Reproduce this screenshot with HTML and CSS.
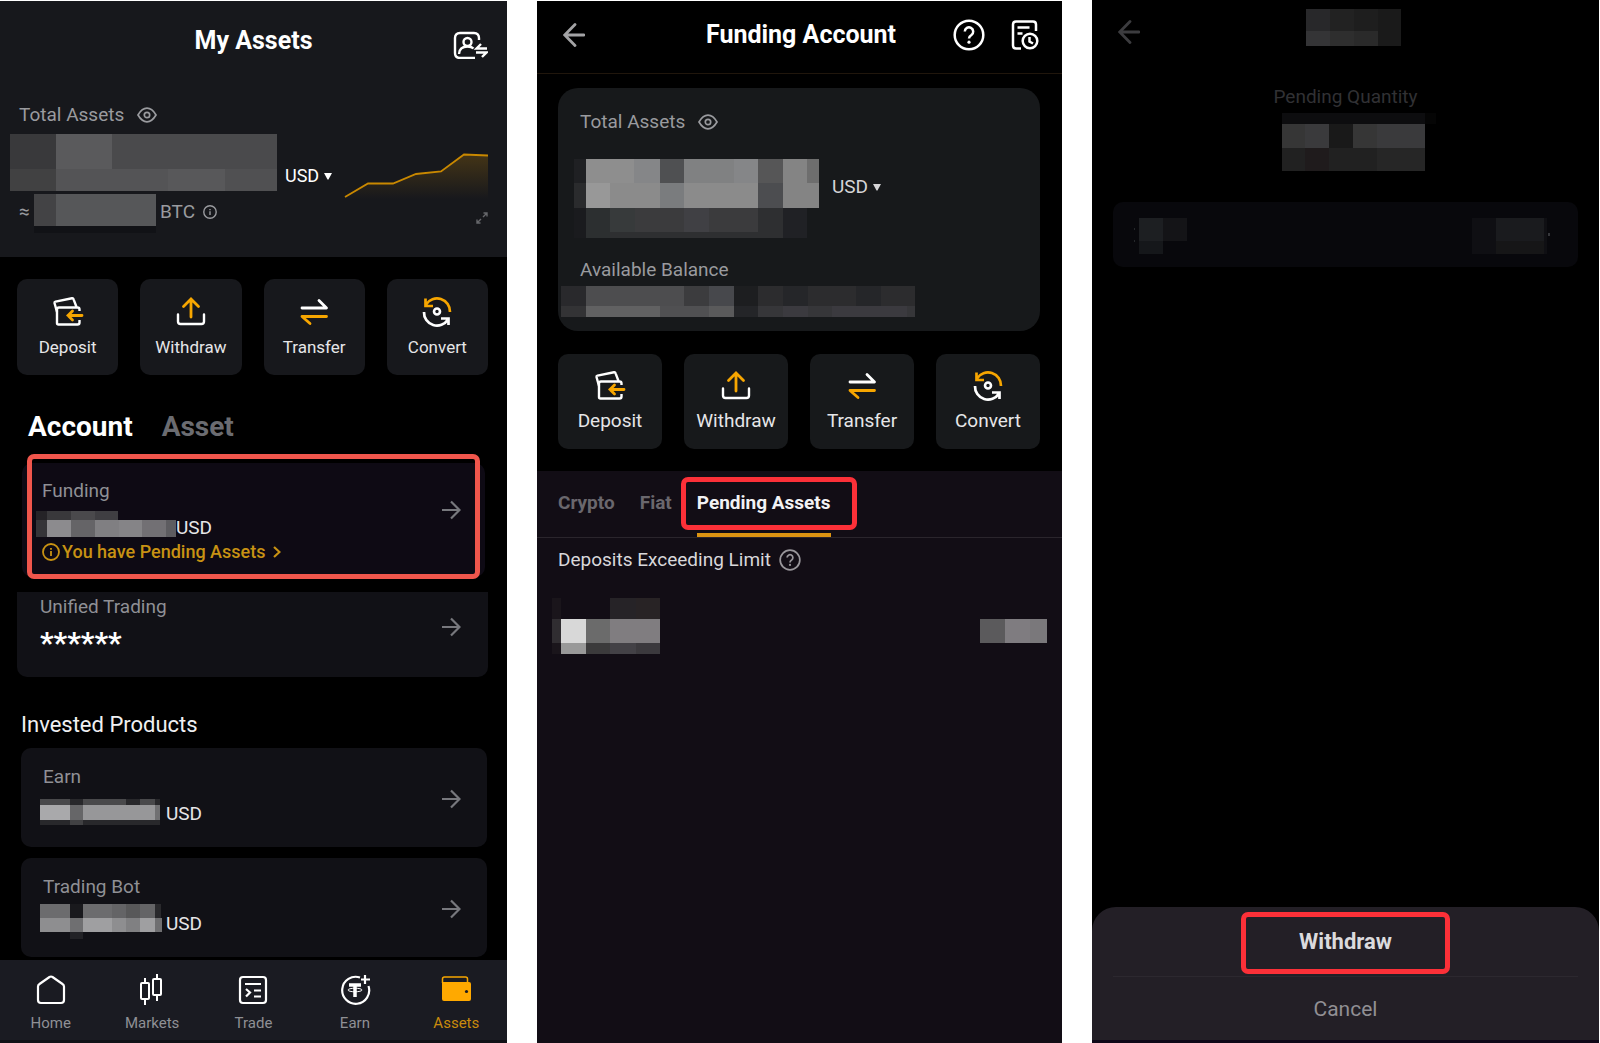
FILE: index.html
```html
<!DOCTYPE html>
<html lang="en">
<head>
<meta charset="utf-8">
<meta name="viewport" content="width=device-width, initial-scale=1">
<title>Pending assets</title>
<link rel="stylesheet" href="styles.css">
</head>
<body>
<svg class="sprite" aria-hidden="true">
  <symbol id="deposit" viewBox="0 0 34 34"><g fill="none" stroke="#fff" stroke-width="2.400" stroke-linejoin="round"><path d="M28.500 16V14.500q0-2-2-2H8q-2 0-2 2V28q0 1.500 1.500 1.500h19q2 0 2-2V25"/><path d="M6 17 3.500 8Q3.300 7 4.500 6.600L21 3.300q1.200-.2 1.600 1L25.500 12"/></g><path d="M31 20.500H17M21.500 16 17 20.500l4.500 4.500" fill="none" stroke="#f7a600" stroke-width="2.800" stroke-linecap="round"/></symbol>
  <symbol id="withdraw" viewBox="0 0 34 34"><path d="M4 19.500v7q0 2.500 2.500 2.500h21q2.500 0 2.500-2.500v-7" fill="none" stroke="#fff" stroke-width="2.400" stroke-linecap="round"/><path d="M17 22V4.500M9.500 11.500 17 4l7.500 7.500" fill="none" stroke="#f7a600" stroke-width="2.800" stroke-linecap="round"/></symbol>
  <symbol id="transfer" viewBox="0 0 34 34"><g fill="none" stroke-width="2.800" stroke-linecap="round" stroke-linejoin="round"><path d="M5 13h24.500L22 5.500" stroke="#fff"/><path d="M29.500 21.500H5l8 7" stroke="#f7a600"/></g></symbol>
  <symbol id="convert" viewBox="0 0 34 34"><path d="M30 17A13 13 0 0 0 6 9.500M5.500 3.500V11H13" fill="none" stroke="#f7a600" stroke-width="2.700"/><path d="M4 17a13 13 0 0 0 24 7.500M28.500 30v-6.500H21" fill="none" stroke="#fff" stroke-width="2.700"/><circle cx="17" cy="16.500" r="3" fill="none" stroke="#fff" stroke-width="2.600"/></symbol>
  <symbol id="eye" viewBox="0 0 20 16"><path d="M1 8Q5 1.200 10 1.200T19 8Q15 14.800 10 14.800T1 8Z" fill="none" stroke="currentColor" stroke-width="1.700"/><circle cx="10" cy="8" r="2.700" fill="none" stroke="currentColor" stroke-width="1.700"/></symbol>
  <symbol id="info" viewBox="0 0 18 18"><circle cx="9" cy="9" r="8" fill="none" stroke="currentColor" stroke-width="1.800"/><path d="M9 5v1.800M9 8v5" stroke="currentColor" stroke-width="1.800"/></symbol>
  <symbol id="help" viewBox="0 0 32 32"><circle cx="16" cy="16" r="14.300" fill="none" stroke="currentColor" stroke-width="2.500"/><path d="M11.800 12.500a4.200 4.200 0 1 1 6.600 3.500Q16 17.500 16 19.500" fill="none" stroke="currentColor" stroke-width="2.500"/><circle cx="16" cy="23.200" r="1.600" fill="currentColor"/></symbol>
  <symbol id="go" viewBox="0 0 20 20"><path d="M1 10h17M10 1.500l8.500 8.500-8.500 8.500" fill="none" stroke="currentColor" stroke-width="2.200"/></symbol>
  <symbol id="back" viewBox="0 0 22 24"><path d="M21 12H2M12 1.500 1.700 12 12 22.500" fill="none" stroke="currentColor" stroke-width="2.800" stroke-linecap="round"/></symbol>
  <symbol id="caret" viewBox="0 0 8 7"><path d="M0 0h8L4.600 6.300q-.6.800-1.200 0Z" fill="currentColor"/></symbol>
</svg>

<main class="screens">
  <section class="phone assets" aria-label="My Assets">
    <div class="overview">
      <header class="overview-head">
        <h1 class="title">My Assets</h1>
        <button class="plain account-switch" aria-label="Switch account">
          <svg width="36" height="36" viewBox="0 0 36 36" fill="none" stroke="#fff" stroke-width="2.400"><path d="M27 17v-2q0-5-5-5H8q-5 0-5 5v15q0 5 5 5h15"/><circle cx="15.500" cy="19" r="4"/><path d="M7 31q.5-7.500 8.500-7.500 4 0 6 2"/><path d="M35 25.500H24.500l4.500-4.500M24 29.500h10.500L30 34"/></svg>
        </button>
      </header>
      <div class="label-line"><span>Total Assets</span><svg width="20" height="16"><use href="#eye"/></svg></div>
      <div class="overview-body">
        <div>
          <div class="overview-total">
            <svg width="267" height="57" shape-rendering="crispEdges"><path fill="#4a4a4c" d="M0 0h267v57H0z"/><path fill="#39393b" d="M0 0h46v35H0z"/><path fill="#414142" d="M0 35h46v22H0z"/><path fill="#5a5a5c" d="M46 0h56v35H46z"/><path fill="#545456" d="M46 35h112v22H46z"/><path fill="#58585a" d="M158 35h57v22h-57z"/><path fill="#505052" d="M215 35h52v22h-52z"/></svg>
            <button class="plain currency">USD<svg width="8" height="7"><use href="#caret"/></svg></button>
          </div>
          <div class="overview-btc">
            <span class="approx">≈</span>
            <svg width="122" height="40" shape-rendering="crispEdges"><path fill="#434345" d="M0 0h22v32H0z"/><path fill="#565759" d="M22 0h100v32H22z"/><path fill="#111216" d="M0 32h122v7H0z"/></svg>
            <span>BTC</span><svg width="14" height="14"><use href="#info"/></svg>
          </div>
        </div>
        <div class="trend">
          <svg width="144" height="47" viewBox="0 0 144 47"><defs><linearGradient id="fade" x1="0" y1="0" x2="0" y2="1"><stop offset="0" stop-color="#f7a600" stop-opacity=".2"/><stop offset="1" stop-color="#f7a600" stop-opacity="0"/></linearGradient></defs><path d="M1 45 24 31.500h25L72 22l25-2.500L120 2.500l24 1V47H1Z" fill="url(#fade)"/><path d="M1 45 24 31.500h25L72 22l25-2.500L120 2.500l24 1" fill="none" stroke="#c98800" stroke-width="1.800"/></svg>
          <svg width="12" height="12" viewBox="0 0 12 12" fill="none" stroke="#66676b" stroke-width="1.400"><path d="M7 5l4-4M7.500 1H11v3.500M5 7l-4 4M1 7.500V11h3.500"/></svg>
        </div>
      </div>
    </div>

    <div class="actions">
      <button class="action"><svg width="34" height="34"><use href="#deposit"/></svg>Deposit</button>
      <button class="action"><svg width="34" height="34"><use href="#withdraw"/></svg>Withdraw</button>
      <button class="action"><svg width="34" height="34"><use href="#transfer"/></svg>Transfer</button>
      <button class="action"><svg width="34" height="34"><use href="#convert"/></svg>Convert</button>
    </div>

    <div class="switch"><button class="plain on">Account</button><button class="plain">Asset</button></div>

    <a class="card funding" href="#funding">
      <span class="card-row">
        <span class="card-text">
          <span class="name">Funding</span>
          <span class="amount"><svg width="140" height="26" shape-rendering="crispEdges"><path fill="#252327" d="M0 0h11v9H0z"/><path fill="#39383b" d="M11 0h24v9H11z"/><path fill="#4a494c" d="M35 0h24v9H35z"/><path fill="#3f3e42" d="M59 0h23v9H59z"/><path fill="#353438" d="M0 9h11v17H0z"/><path fill="#8c8b8e" d="M11 9h24v17H11z"/><path fill="#656467" d="M35 9h24v17H35z"/><path fill="#807f82" d="M59 9h24v17H59z"/><path fill="#858487" d="M83 9h23v17H83z"/><path fill="#727074" d="M106 9h24v17h-24z"/><path fill="#5d5c60" d="M130 9h10v17h-10z"/></svg>USD</span>
        </span>
        <svg class="go" width="20" height="20"><use href="#go"/></svg>
      </span>
      <span class="notice"><svg width="18" height="18"><use href="#info"/></svg>You have Pending Assets<svg class="chev" width="8" height="12" viewBox="0 0 8 12"><path d="M1 1l5.500 5L1 11" fill="none" stroke="currentColor" stroke-width="2.200"/></svg></span>
    </a>

    <a class="card unified" href="#unified">
      <span class="card-text"><span class="name">Unified Trading</span><span class="stars">******</span></span>
      <svg class="go" width="20" height="20"><use href="#go"/></svg>
    </a>

    <h2 class="subhead">Invested Products</h2>
    <div class="products">
      <a class="card product" href="#earn">
        <span class="card-text"><span class="name">Earn</span>
          <span class="amount"><svg width="122" height="40" shape-rendering="crispEdges"><path fill="#49494b" d="M0 5h30v6H0zM43 5h43v6H43zM100 5h15v6h-15z"/><path fill="#28282b" d="M30 5h13v6H30zM86 5h14v6H86zM115 5h5v6h-5zM0 25h120v6H0z"/><path fill="#a9a9ab" d="M0 11h30v15H0z"/><path fill="#666668" d="M30 11h13v15H30z"/><path fill="#979799" d="M43 11h72v15H43z"/><path fill="#707072" d="M115 11h5v15h-5z"/><path fill="#414143" d="M30 26h13v5H30z"/></svg>USD</span></span>
        <svg class="go" width="20" height="20"><use href="#go"/></svg>
      </a>
      <a class="card product" href="#bot">
        <span class="card-text"><span class="name">Trading Bot</span>
          <span class="amount"><svg width="122" height="40" shape-rendering="crispEdges"><path fill="#6c6c6e" d="M0 0h30v14H0zM43 0h29v14H43z"/><path fill="#19191d" d="M30 0h13v14H30z"/><path fill="#646466" d="M72 0h14v14H72zM100 0h15v14h-15z"/><path fill="#585859" d="M86 0h14v14H86z"/><path fill="#29292c" d="M115 0h6v14h-6z"/><path fill="#8e8e90" d="M0 14h30v14H0zM72 14h14v14H72z"/><path fill="#6f6f71" d="M30 14h13v14H30zM115 14h7v14h-7z"/><path fill="#9f9fa1" d="M43 14h29v14H43zM100 14h15v14h-15z"/><path fill="#808082" d="M86 14h14v14H86z"/><path fill="#222226" d="M30 28h13v7H30z"/></svg>USD</span></span>
        <svg class="go" width="20" height="20"><use href="#go"/></svg>
      </a>
    </div>

    <nav class="tabbar">
      <a href="#home"><svg width="32" height="32" viewBox="0 0 32 32" fill="none" stroke="#fff" stroke-width="2.200"><path d="M3 12.500Q3 11 4.500 10L14.500 3q1.500-1 3 0l10 7Q29 11 29 12.500V26q0 3-3 3H6q-3 0-3-3Z"/></svg>Home</a>
      <a href="#markets"><svg width="32" height="32" viewBox="0 0 32 32" fill="none" stroke="#fff" stroke-width="2"><path d="M6 9h6q1 0 1 1v14q0 1-1 1H6q-1 0-1-1V10q0-1 1-1ZM9 4v5M9 25v6M18 5h6q1 0 1 1v14q0 1-1 1h-6q-1 0-1-1V6q0-1 1-1ZM21 0v5M21 21v6"/></svg>Markets</a>
      <a href="#trade"><svg width="32" height="32" viewBox="0 0 32 32" fill="none" stroke="#fff" stroke-width="2.200"><rect x="3" y="3" width="26" height="26" rx="3"/><path d="M8 10h16M17 16.500h7M17 22.500h7M9 15l4 3.500L9 22.500"/></svg>Trade</a>
      <a href="#earn-tab"><svg width="32" height="32" viewBox="0 0 32 32" fill="none" stroke="#fff" stroke-width="2.200"><path d="M21 3.500A13.500 13.500 0 1 0 29.500 12M26 1v9M22 5.500h9"/><path d="M10 11h12M16 11v12" stroke-width="3.500"/><ellipse cx="16" cy="16" rx="7" ry="1.800" stroke-width="1"/></svg>Earn</a>
      <a href="#assets" class="on" aria-current="page"><svg width="32" height="32" viewBox="0 0 32 32"><path d="M2.500 9V5q0-2 2-2h21q2 0 2 2v4" fill="none" stroke="#f7a600" stroke-width="1.500"/><path d="M2 8h27q2 0 2 2v15q0 2-2 2H4q-2 0-2-2Z" fill="#ffa900"/><circle cx="26.500" cy="17.500" r="1.600" fill="#1a1b22"/></svg>Assets</a>
    </nav>
  </section>

  <section class="phone account" aria-label="Funding Account">
    <header class="bar">
      <button class="plain" aria-label="Back"><svg width="22" height="24"><use href="#back"/></svg></button>
      <h1 class="title">Funding Account</h1>
      <div class="bar-tools">
        <button class="plain" aria-label="Help"><svg width="32" height="32"><use href="#help"/></svg></button>
        <button class="plain" aria-label="History"><svg width="28" height="30" viewBox="0 0 28 30" fill="none" stroke="currentColor" stroke-width="2.500"><path d="M10 28.500H5q-3 0-3-3v-21q0-3 3-3h17q3 0 3 3V11M6.500 7.500h12M6.500 13.500h5"/><circle cx="19" cy="21" r="7.300"/><path d="M18.500 17v4.500l3.500 2"/></svg></button>
      </div>
    </header>
    <div class="balance">
      <div class="label-line"><span>Total Assets</span><svg width="20" height="16"><use href="#eye"/></svg></div>
      <div class="balance-total">
        <svg width="245" height="79" viewBox="0 0 245 82" preserveAspectRatio="none" shape-rendering="crispEdges"><path fill="#1f2023" d="M0 0h12v25H0z"/><path fill="#2a2b2d" d="M0 25h12v26H0z"/><path fill="#1a1b1e" d="M0 51h12v31H0z"/><path fill="#8e8e8e" d="M12 0h48v25H12z"/><path fill="#858688" d="M60 0h26v25H60zM160 0h24v25h-24z"/><path fill="#4f5052" d="M86 0h24v25H86z"/><path fill="#808182" d="M110 0h50v25h-50z"/><path fill="#565657" d="M184 0h25v25h-25z"/><path fill="#848484" d="M209 0h24v25h-24zM209 25h36v26h-36z"/><path fill="#6e6e6e" d="M233 0h12v25h-12z"/><path fill="#989898" d="M12 25h24v26H12z"/><path fill="#8b8b8b" d="M36 25h50v26H36zM110 25h74v26h-74z"/><path fill="#7a7c7e" d="M86 25h24v26H86z"/><path fill="#4c4d50" d="M184 25h25v26h-25z"/><path fill="#2c2f30" d="M12 51h24v31H12z"/><path fill="#373a3b" d="M36 51h25v25H36z"/><path fill="#3b3b3d" d="M61 51h123v25H61z"/><path fill="#404044" d="M110 51h25v25h-25z"/><path fill="#2e2f31" d="M36 76h148v6H36zM184 51h25v31h-25z"/><path fill="#202125" d="M209 51h24v31h-24z"/></svg>
        <button class="plain currency">USD<svg width="8" height="7"><use href="#caret"/></svg></button>
      </div>
      <div class="label-line available">Available Balance</div>
      <svg class="available-value" width="354" height="31" shape-rendering="crispEdges"><path fill="#29292c" d="M0 0h25v20H0z"/><path fill="#333335" d="M0 20h25v12H0z"/><path fill="#4d4d4f" d="M25 0h98v20H25z"/><path fill="#3c3c3e" d="M123 0h25v20h-25z"/><path fill="#47484c" d="M148 0h25v20h-25z"/><path fill="#616162" d="M25 20h74v12H25z"/><path fill="#505052" d="M99 20h49v12H99z"/><path fill="#5a5a5b" d="M148 20h25v12h-25z"/><path fill="#1d1e20" d="M173 0h24v20h-24z"/><path fill="#242528" d="M173 20h24v12h-24z"/><path fill="#2c2c2e" d="M197 0h157v20H197z"/><path fill="#252629" d="M222 0h25v20h-25zM295 0h25v20h-25z"/><path fill="#363639" d="M197 20h157v12H197z"/><path fill="#3b3a3f" d="M222 20h25v12h-25zM271 20h75v12h-75z"/></svg>
    </div>
    <div class="actions">
      <button class="action"><svg width="34" height="34"><use href="#deposit"/></svg>Deposit</button>
      <button class="action"><svg width="34" height="34"><use href="#withdraw"/></svg>Withdraw</button>
      <button class="action"><svg width="34" height="34"><use href="#transfer"/></svg>Transfer</button>
      <button class="action"><svg width="34" height="34"><use href="#convert"/></svg>Convert</button>
    </div>
    <div class="holdings">
      <div class="tabs">
        <button class="plain">Crypto</button>
        <button class="plain">Fiat</button>
        <button class="plain on">Pending Assets</button>
      </div>
      <h2 class="limit">Deposits Exceeding Limit<svg width="22" height="22"><use href="#help"/></svg></h2>
      <div class="pending">
        <svg width="108" height="56" viewBox="0 0 108 58" preserveAspectRatio="none" shape-rendering="crispEdges"><path fill="#1a151b" d="M0 0h9v22H0zM0 47h9v11H0z"/><path fill="#262327" d="M58 0h26v22H58z"/><path fill="#282325" d="M84 0h24v22H84z"/><path fill="#302d31" d="M0 22h9v25H0z"/><path fill="#d8d8d8" d="M9 22h25v25H9z"/><path fill="#6b6b6b" d="M34 22h24v25H34z"/><path fill="#807d80" d="M58 22h50v25H58z"/><path fill="#999" d="M9 47h25v11H9z"/><path fill="#3b3a3b" d="M34 47h24v11H34z"/><path fill="#434146" d="M58 47h26v11H58z"/><path fill="#3b393d" d="M84 47h24v11H84z"/></svg>
        <svg width="67" height="56" viewBox="0 0 67 58" preserveAspectRatio="none" shape-rendering="crispEdges"><path fill="#5b5a5c" d="M0 22h25v25H0z"/><path fill="#7f7c80" d="M25 22h25v25H25z"/><path fill="#7a787b" d="M50 22h17v25H50z"/></svg>
      </div>
    </div>
  </section>

  <section class="phone quantity" aria-label="Pending Quantity">
    <header class="quantity-head">
      <button class="plain" aria-label="Back"><svg width="22" height="24"><use href="#back"/></svg></button>
      <svg width="111" height="46" shape-rendering="crispEdges"><path fill="#28282a" d="M16 0h24v22H16z"/><path fill="#222" d="M40 0h24v22H40z"/><path fill="#1e1e1e" d="M64 0h24v22H64z"/><path fill="#1a1a1a" d="M88 0h23v37H88z"/><path fill="#343436" d="M16 22h24v15H16z"/><path fill="#2e2e2e" d="M40 22h24v15H40z"/><path fill="#2a2a2a" d="M64 22h24v15H64z"/></svg>
    </header>
    <h2 class="quantity-label">Pending Quantity</h2>
    <svg class="quantity-value" width="181" height="58" shape-rendering="crispEdges"><path fill="#0d0d0f" d="M27 0h143v11H27z"/><path fill="#050505" d="M170 0h11v11h-11z"/><path fill="#363636" d="M27 11h23v24H27zM98 11h24v24H98z"/><path fill="#3a3a3c" d="M50 11h24v24H50zM122 11h48v24h-48z"/><path fill="#191919" d="M74 11h24v24H74z"/><path fill="#212121" d="M27 35h143v23H27z"/><path fill="#1f1b1c" d="M50 35h24v23H50z"/><path fill="#262626" d="M122 35h48v23h-48z"/></svg>
    <div class="quantity-card">
      <svg width="53" height="36" shape-rendering="crispEdges"><path fill="#1d1f22" d="M5 0h24v23H5z"/><path fill="#141417" d="M29 0h24v23H29z"/><path fill="#15171a" d="M5 23h24v13H5z"/><path fill="#25282b" d="M0 10h1v2H0zM0 22h1v2H0z"/></svg>
      <svg width="78" height="36" shape-rendering="crispEdges"><path fill="#0f0f13" d="M0 0h24v36H0zM72 0h3v36h-3z"/><path fill="#1a1b1e" d="M24 0h48v23H24z"/><path fill="#161617" d="M24 23h48v13H24z"/><path fill="#36373b" d="M76 15h2v3h-2z"/></svg>
    </div>
    <div class="sheet">
      <button class="plain primary">Withdraw</button>
      <button class="plain cancel">Cancel</button>
    </div>
  </section>
</main>
</body>
</html>
```

FILE: styles.css
```css
*, *::after { box-sizing: border-box; }

body {
  margin: 0;
  background: #fff;
  color: #fff;
  font-family: Roboto, "Liberation Sans", sans-serif;
  font-size: 19px;
  line-height: 24px;
}

.sprite { position: absolute; width: 0; height: 0; }
svg { display: block; flex: none; }
h1, h2 { margin: 0; font-weight: 400; }
a { color: inherit; text-decoration: none; }

.plain {
  padding: 0;
  border: 0;
  background: none;
  color: inherit;
  font: inherit;
  cursor: pointer;
}

.screens {
  display: grid;
  grid-template-columns: minmax(0, 507fr) minmax(0, 525fr) minmax(0, 507fr);
  gap: 30px;
  min-height: 100vh;
  padding-right: 1px;
}

.phone { display: flex; flex-direction: column; background: #000; }
.assets, .account { margin-top: 1px; }

.title { font-size: 25px; font-weight: 700; line-height: 38px; text-align: center; }

.label-line { display: flex; align-items: center; gap: 13px; color: #9a9b9f; }
.currency { display: flex; align-items: center; gap: 5px; font-size: 18px; }

/* My Assets */
.overview { padding: 21px 19px 31px 10px; background: #17181c; }
.overview-head { display: grid; grid-template-columns: 1fr auto 1fr; padding-left: 9px; }
.overview-head .title { grid-column: 2; }
.account-switch { justify-self: end; }
.overview .label-line { margin: 43px 0 7px; padding-left: 9px; }
.overview-body { display: flex; justify-content: space-between; }
.overview-total { display: flex; gap: 8px; }
.overview-total .currency { margin-top: 30px; height: 24px; }
.overview-btc { display: flex; height: 32px; margin-top: 3px; padding-left: 9px; line-height: 36px; color: #9a9b9f; }
.overview-btc svg:last-child { margin: 11px 0 0 8px; }
.overview-btc span { margin-left: 4px; }
.overview-btc .approx { width: 15px; margin-left: 0; }
.trend { display: flex; flex-direction: column; justify-content: flex-end; align-items: flex-end; gap: 13px; padding-bottom: 2px; }

.actions { display: grid; grid-template-columns: repeat(4, 1fr); gap: 22px; padding: 22px 19px 0 17px; }
.action {
  display: flex;
  flex-direction: column;
  align-items: center;
  gap: 8px;
  padding: 16px 0 18px;
  border: 0;
  border-radius: 10px;
  background: #17181c;
  color: #e6e6e8;
  font: inherit;
  font-size: 17px;
  line-height: 20px;
  cursor: pointer;
}

.switch { display: flex; gap: 29px; margin: 34px 28px 0; font-size: 28px; font-weight: 700; line-height: 36px; color: #6b6c71; }
.switch .on { color: #fff; }

.card { display: flex; border-radius: 10px; background: #111116; }
.card-row { display: flex; align-items: center; }
.card-text { display: flex; flex: 1; flex-direction: column; }
.name { color: #8f9095; }
.amount { display: flex; align-items: center; color: #e6e6e8; }
.go { color: #77787d; }

.funding { position: relative; flex-direction: column; margin: 18px 22px 0; padding: 16px 24px 14px 14px; background: #0e0a14; }
.funding::after { content: ""; position: absolute; inset: -9px 5px -2px; border: 5px solid #f0564c; border-radius: 7px; }
.funding .name { padding-left: 6px; }
.funding .amount { align-items: flex-start; height: 38px; padding-top: 8px; line-height: 34px; }
.notice { display: flex; align-items: center; gap: 2px; padding-left: 6px; font-size: 18px; font-weight: 500; line-height: 22px; color: #c89213; }
.notice .chev { margin-left: 6px; }

.unified { align-items: center; margin: 15px 19px 0 17px; padding: 3px 27px 18px 23px; border-radius: 0 0 10px 10px; }
.stars { height: 40px; font-size: 30px; font-weight: 700; line-height: 48px; }

.subhead { margin: 34px 21px 9px; font-size: 22px; line-height: 28px; color: #f0f0f2; }
.products { display: grid; gap: 11px; margin: 0 20px 0 21px; }
.product { align-items: center; padding: 17px 26px 15px 19px; }
.product .name { padding-left: 3px; }
.product .amount { gap: 4px; height: 36px; margin-top: 7px; }

.tabbar { display: grid; grid-template-columns: repeat(5, 1fr); margin-top: auto; padding: 14px 0 5px; border-bottom: 3px solid #101116; background: #1a1b22; }
.tabbar a { display: flex; flex-direction: column; align-items: center; gap: 5px; font-size: 15px; color: #8f9095; }
.tabbar .on { color: #c98a0c; }

/* Funding Account */
.bar { display: grid; grid-template-columns: 1fr auto 1fr; align-items: center; height: 73px; padding: 0 23px 4px 26px; border-bottom: 1px solid #20160c; }
.bar > .plain { justify-self: start; color: #a3a3a5; }
.bar-tools { display: flex; justify-content: flex-end; align-items: center; gap: 26px; }
.balance { margin: 14px 22px 0 21px; padding: 22px 3px 14px; border-radius: 20px; background: #17191b; }
.balance .label-line { padding-left: 19px; }
.balance-total { display: flex; gap: 13px; margin: 25px 0 20px 13px; }
.balance-total .currency { height: 24px; margin-top: 16px; color: #d5d5d7; font-size: 19px; }
.available-value { margin-top: 4px; }
.account .actions { padding: 23px 22px 0 21px; }
.account .action { padding: 15px 0 18px; background: #17191b; font-size: 19px; }
.holdings { flex: 1; margin-top: 22px; background: #120d15; }
.tabs { display: flex; gap: 25px; height: 67px; padding: 0 21px; border-bottom: 1px solid #2a252c; font-weight: 700; color: #6a676d; }
.tabs .plain { padding-bottom: 2px; }
.tabs .on { position: relative; border-bottom: 4px solid #dc9412; padding-top: 4px; color: #f2f2f4; }
.tabs .on::after { content: ""; position: absolute; inset: 6px -26px 3px -16px; border: 5px solid #fc3038; border-radius: 7px; }
.limit { display: flex; align-items: center; gap: 8px; padding: 10px 21px 0; font-size: 19px; color: #d9d8db; }
.limit svg { color: #99969b; }
.pending { display: flex; justify-content: space-between; padding: 26px 15px; }

/* Pending Quantity */
.quantity-head { display: grid; grid-template-columns: 1fr auto 1fr; align-items: center; padding: 9px 26px 0; color: #3c3c3f; }
.quantity-head .plain { justify-self: start; }
.quantity-label { margin-top: 30px; font-size: 19px; text-align: center; color: #313134; }
.quantity-value { align-self: center; margin-top: 4px; }
.quantity-card { display: flex; justify-content: space-between; margin: 31px 21px 0; padding: 16px 28px 13px 21px; border-radius: 10px; background: #08080c; }
.sheet { display: flex; flex-direction: column; margin-top: auto; border-bottom: 3px solid #0f0818; border-radius: 24px 24px 0 0; background: #231f26; font-size: 21px; }
.primary { position: relative; height: 70px; margin: 0 21px; border-bottom: 1px solid #2c282f; color: #dbdadd; font-size: 22px; font-weight: 700; }
.primary::after { content: ""; position: absolute; top: 5px; bottom: 2px; left: calc(50% - 105px); width: 209px; border: 5px solid #fc3038; border-radius: 7px; }
.cancel { height: 63px; color: #918f94; }
```
